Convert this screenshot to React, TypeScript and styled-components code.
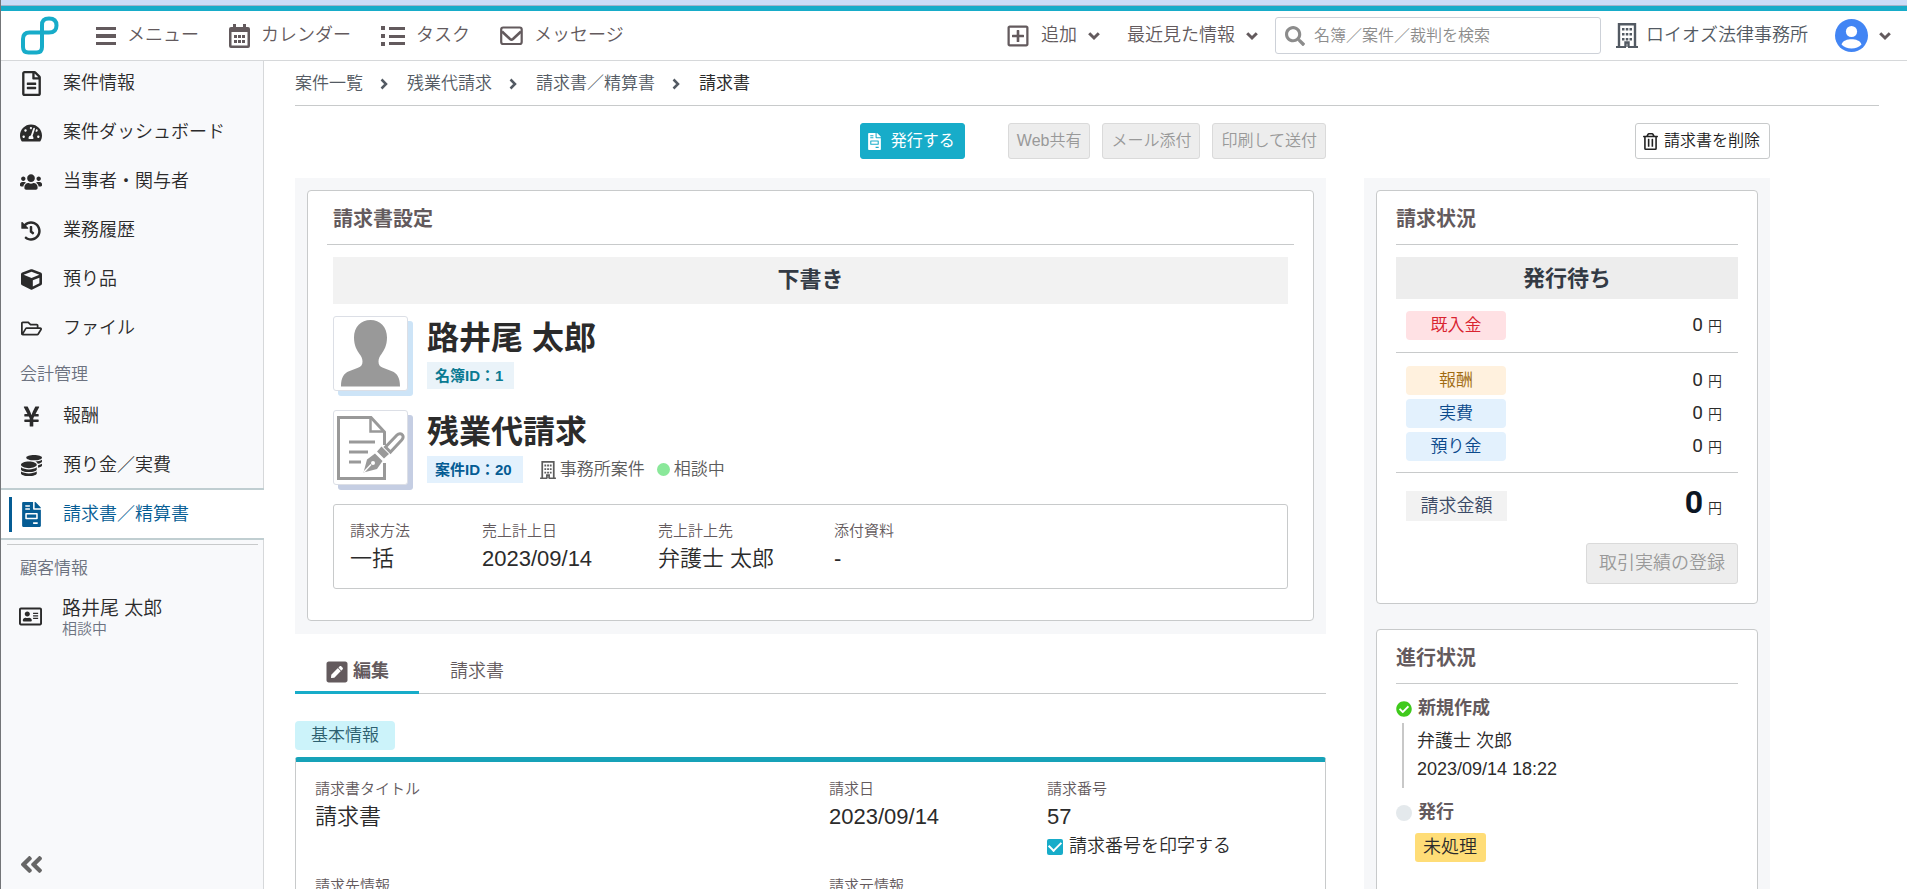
import React from "react";
import styled, { createGlobalStyle, css } from "styled-components";
import {
  FaAngleDoubleLeft,
  FaCheckCircle,
  FaCoins,
  FaCube,
  FaFileInvoice,
  FaHistory,
  FaPenSquare,
  FaRegAddressCard,
  FaRegFileAlt,
  FaRegFolderOpen,
  FaRegPlusSquare,
  FaRegTrashAlt,
  FaSearch,
  FaTachometerAlt,
  FaUsers,
  FaYenSign,
} from "react-icons/fa";

const color = {
  teal: "#17acc9",
  line: "#c8cacb",
  ink: "#2b2b2b",
  brown: "#635a5d",
  slate: "#535a63",
  muted: "#6c7280",
  panel: "#f6f7f9",
};

const GlobalStyle = createGlobalStyle`
  * { box-sizing: border-box; }
  body {
    margin: 0;
    background: #fff;
    color: ${color.ink};
    font-family: "Liberation Sans", "Noto Sans CJK JP", sans-serif;
    font-size: 18px;
    line-height: 1.5;
    font-weight: 350;
  }
  button, input { font: inherit; }
  button { cursor: pointer; }
  a { color: inherit; text-decoration: none; }
  h1, h2, h3, p, dl, dd, ul, ol { margin: 0; padding: 0; font-weight: inherit; font-size: inherit; }
  ul, ol { list-style: none; }
  svg { display: block; flex: none; }
`;

/* ---------- frame ---------- */

const Frame = styled.div`
  height: 100vh;
  display: flex;
  flex-direction: column;
  overflow: hidden;
  border-left: 1px solid #737578;
`;

const TopStrip = styled.div`
  flex: none;
  height: 11px;
  background: #cbdcf7;
  border-bottom: 5px solid ${color.teal};
  box-shadow: inset 0 -1px 0 #a5b3cb;
`;

const Header = styled.header`
  flex: none;
  height: 50px;
  display: flex;
  align-items: center;
  padding: 0 16px 0 20px;
  border-bottom: 1px solid #d6d8da;
  color: ${color.brown};
`;

const HeaderNav = styled.nav`
  display: flex;
  align-items: center;
  gap: 30px;
  margin-left: 37px;
`;

const HeaderLink = styled.a`
  display: flex;
  align-items: center;
  gap: 11px;
  white-space: nowrap;
`;

const HeaderTools = styled.div`
  display: flex;
  align-items: center;
  margin-left: auto;
`;

const HeaderButton = styled.button<{ $after: number }>`
  display: flex;
  align-items: center;
  gap: 11px;
  margin-right: ${(p) => p.$after}px;
  padding: 0;
  border: 0;
  background: none;
  color: inherit;
  white-space: nowrap;
`;

const SearchBox = styled.label`
  display: flex;
  align-items: center;
  gap: 9px;
  width: 326px;
  height: 37px;
  padding: 0 9px;
  border: 1px solid #cdd1d8;
  border-radius: 3px;
  color: #8c8c8c;
`;

const SearchInput = styled.input`
  flex: 1;
  min-width: 0;
  border: 0;
  padding: 0;
  outline: 0;
  background: none;
  font-size: 16px;
  &::placeholder { color: #8c8c8c; opacity: 1; }
`;

const OfficeLink = styled.a`
  display: flex;
  align-items: center;
  gap: 8px;
  margin: 0 27px 0 15px;
  white-space: nowrap;
  color: ${color.slate};
`;

const Body = styled.div`
  flex: 1;
  min-height: 0;
  display: flex;
`;

/* ---------- sidebar ---------- */

const Sidebar = styled.aside`
  flex: none;
  width: 263px;
  display: flex;
  flex-direction: column;
  background: #f8f9fb;
  border-right: 1px solid #d6d8da;
`;

const SideList = styled.ul`
  margin-top: -2px;
`;

const SideLink = styled.a<{ $active?: boolean }>`
  display: flex;
  align-items: center;
  height: 49px;
  padding-left: 19px;
  white-space: nowrap;
  ${(p) =>
    p.$active &&
    css`
      position: relative;
      height: 52px;
      margin: -2px -1px 0 0;
      padding-left: 8px;
      border: solid #c0ced1;
      border-width: 2px 0;
      background: #fff;
      color: #055c94;
    `}
`;

const ActiveBar = styled.span`
  width: 3px;
  height: 35px;
  margin-right: 8px;
  background: #055c94;
`;

const SideIcon = styled.span`
  display: flex;
  justify-content: center;
  width: 22px;
  margin-right: 21px;
`;

const SideHeading = styled.h3`
  height: 39px;
  padding-left: 19px;
  line-height: 43px;
  font-size: 17px;
  color: ${color.muted};
`;

const ClientGroup = styled.section`
  margin: 4px 5px 0 6px;
  padding-top: 4px;
  border-top: 1px solid ${color.line};
`;

const ClientHeading = styled(SideHeading)`
  padding-left: 13px;
  line-height: 39px;
`;

const ClientLink = styled.a`
  display: flex;
  align-items: center;
  gap: 20px;
  padding: 8px 0 0 12px;
`;

const ClientName = styled.strong`
  display: block;
  font-size: 19px;
  line-height: 25px;
  font-weight: 350;
`;

const ClientState = styled.span`
  display: block;
  font-size: 15px;
  line-height: 16px;
  color: ${color.muted};
`;

const CollapseButton = styled.button`
  align-self: flex-start;
  margin: auto 0 11px 17px;
  padding: 0;
  border: 0;
  background: none;
  color: #666;
`;

/* ---------- main ---------- */

const Main = styled.main`
  flex: 1;
  min-width: 0;
  padding: 0 28px 0 31px;
  overflow-y: auto;
  scrollbar-width: none;
`;

const Breadcrumb = styled.ol`
  display: flex;
  align-items: center;
  height: 45px;
  padding-top: 1px;
  border-bottom: 1px solid ${color.line};
  font-size: 17px;
  color: ${color.slate};
  white-space: nowrap;
`;

const Crumb = styled.li`
  display: flex;
  align-items: center;
  gap: 16px;
  margin-right: 18px;
`;

const CurrentCrumb = styled.span`
  font-weight: 400;
  color: ${color.ink};
`;

const Columns = styled.div`
  display: grid;
  grid-template-columns: minmax(0, 1fr) 406px;
  column-gap: 38px;
  margin-right: 109px;
`;

const Toolbar = styled.div`
  display: flex;
  justify-content: flex-end;
  gap: 12px;
  padding: 17px 0 19px;
`;

const Button = styled.button<{ $kind?: "primary" | "plain"; $large?: boolean }>`
  display: flex;
  align-items: center;
  justify-content: center;
  height: ${(p) => (p.$large ? 41 : 36)}px;
  padding: 0 ${(p) => (p.$large ? 12 : 8)}px;
  border: 1px solid #dadada;
  border-radius: 3px;
  background: #ededed;
  color: #999;
  font-size: ${(p) => (p.$large ? 18 : 16)}px;
  white-space: nowrap;
  ${(p) =>
    p.$kind === "primary" &&
    css`
      gap: 8px;
      margin-right: 31px;
      padding: 0 9px 0 5px;
      border-color: ${color.teal};
      background: ${color.teal};
      color: #fff;
      font-weight: 400;
    `}
  ${(p) =>
    p.$kind === "plain" &&
    css`
      gap: 5px;
      padding: 0 9px 0 6px;
      border-color: ${color.line};
      background: #fff;
      color: #222;
    `}
`;

const Panel = styled.div`
  padding: 12px 12px 13px;
  background: ${color.panel};
`;

const Card = styled.section`
  padding: 0 19px;
  border: 1px solid ${color.line};
  border-radius: 4px;
  background: #fff;
  & + & { margin-top: 25px; }
`;

const CardTitle = styled.h2<{ $inset?: boolean }>`
  height: 54px;
  padding-left: ${(p) => (p.$inset ? 6 : 0)}px;
  border-bottom: 1px solid ${color.line};
  line-height: 56px;
  font-size: 20px;
  font-weight: 700;
  color: ${color.brown};
`;

const SettingsBody = styled.div`
  padding: 12px 6px 31px;
`;

const StatusBand = styled.p<{ $tall?: boolean }>`
  height: ${(p) => (p.$tall ? 47 : 42)}px;
  line-height: ${(p) => (p.$tall ? 45 : 43)}px;
  background: ${(p) => (p.$tall ? "#f2f2f2" : "#ededed")};
  text-align: center;
  font-size: 22px;
  font-weight: 700;
  color: #333a44;
`;

const BillingBody = styled.div`
  padding: 12px 0 19px;
`;

const Subject = styled.div`
  display: flex;
  gap: 19px;
  margin-top: 12px;
  & + & { margin-top: 19px; }
`;

const Thumb = styled.div<{ $shadow: string }>`
  flex: none;
  display: grid;
  place-items: center;
  width: 75px;
  height: 75px;
  border: 1px solid #dcdfe6;
  border-radius: 3px;
  background: #fff;
  box-shadow: 5px 5px 0 ${(p) => p.$shadow};
`;

const SubjectName = styled.h3`
  margin-bottom: 2px;
  line-height: 44px;
  font-size: 32px;
  font-weight: 700;
`;

const SubjectMeta = styled.div`
  display: flex;
  align-items: center;
  font-size: 17px;
  line-height: 27px;
  color: #5c5c5c;
`;

const IdTag = styled.span<{ $blue?: boolean }>`
  height: 27px;
  margin-right: 17px;
  padding: 0 11px 0 8px;
  font-size: 15px;
  font-weight: 700;
  background: ${(p) => (p.$blue ? "#e3f1fd" : "#eaf3f9")};
  color: ${(p) => (p.$blue ? "#055c94" : "#0a7a92")};
`;

const MetaItem = styled.span`
  display: flex;
  align-items: center;
  gap: 4px;
  margin-right: 12px;
`;

const Dot = styled.i`
  width: 13px;
  height: 13px;
  border-radius: 50%;
  background: #8ae89a;
`;

const Summary = styled.dl`
  display: grid;
  grid-template-columns: 132px 176px 176px 1fr;
  height: 85px;
  margin-top: 19px;
  padding: 14px 16px 12px;
  border: 1px solid ${color.line};
  border-radius: 3px;
`;

const Term = styled.dt`
  font-size: 15px;
  line-height: 24px;
  color: ${color.brown};
`;

const Value = styled.dd`
  font-size: 22px;
  line-height: 32px;
`;

const Tabs = styled.div`
  display: flex;
  gap: 1px;
  height: 46px;
  margin-top: 14px;
  border-bottom: 1px solid ${color.line};
`;

const Tab = styled.button<{ $active?: boolean }>`
  display: flex;
  align-items: center;
  gap: 4px;
  height: 46px;
  padding: 4px 30px 0;
  border: 0;
  border-bottom: 3px solid ${(p) => (p.$active ? color.teal : "transparent")};
  background: none;
  font-weight: ${(p) => (p.$active ? 700 : 350)};
  color: ${color.brown};
`;

const SectionTag = styled.h2`
  width: 100px;
  height: 29px;
  margin: 27px 0 7px;
  border-radius: 4px;
  background: #ccf3fa;
  line-height: 29px;
  text-align: center;
  font-size: 17px;
  color: #2d6070;
`;

const InfoCard = styled.dl`
  display: grid;
  grid-template-columns: minmax(0, 1fr) 218px 278px;
  row-gap: 14px;
  padding: 15px 0 20px 19px;
  border: 1px solid ${color.line};
  border-top: 5px solid #17a2b8;
  border-radius: 3px;
`;

const CheckLabel = styled.label`
  display: flex;
  align-items: center;
  gap: 6px;
  height: 27px;
`;

const Checkbox = styled.input`
  appearance: none;
  flex: none;
  width: 16px;
  height: 16px;
  margin: 0;
  border-radius: 2px;
  background: ${color.teal};
  display: grid;
  place-items: center;
  &:checked::after {
    content: "";
    width: 10px;
    height: 6px;
    margin-bottom: 3px;
    border: solid #fff;
    border-width: 0 0 2px 2px;
    transform: rotate(-45deg);
  }
`;

/* ---------- billing status ---------- */

const AmountGroup = styled.dl`
  display: flex;
  flex-direction: column;
  gap: 4px;
  padding: 12px 16px 12px 10px;
  & + & {
    padding-top: 13px;
    padding-bottom: 11px;
    border-top: 1px solid ${color.line};
  }
`;

const AmountRow = styled.div`
  display: flex;
  align-items: center;
  justify-content: space-between;
  height: 29px;
`;

const tones = {
  red: ["#ffe1e4", "#d9232f"],
  amber: ["#fff1de", "#a06b10"],
  blue: ["#e3f1fd", "#0b4a8c"],
};

const AmountLabel = styled.dt<{ $tone: keyof typeof tones }>`
  width: 100px;
  height: 29px;
  border-radius: 4px;
  line-height: 29px;
  text-align: center;
  font-size: 17px;
  background: ${(p) => tones[p.$tone][0]};
  color: ${(p) => tones[p.$tone][1]};
`;

const AmountValue = styled.dd`
  font-family: Roboto, "Noto Sans CJK JP", sans-serif;
  font-size: 19px;
  font-weight: 400;
  line-height: 27px;
`;

const Unit = styled.small`
  margin-left: 5px;
  font-size: 14px;
  font-weight: 350;
`;

const TotalRow = styled.dl`
  display: flex;
  justify-content: space-between;
  align-items: center;
  height: 66px;
  padding: 0 16px 0 10px;
  border-top: 1px solid ${color.line};
`;

const TotalLabel = styled.dt`
  width: 101px;
  line-height: 30px;
  text-align: center;
  background: #f2f2f2;
  color: #3b4a66;
`;

const TotalValue = styled(AmountValue)`
  font-size: 32px;
  font-weight: 700;
  color: #0c1624;
  & small { color: ${color.ink}; }
`;

const CardFooter = styled.div`
  display: flex;
  justify-content: flex-end;
  padding-top: 5px;
`;

/* ---------- progress ---------- */

const Steps = styled.ol`
  padding: 12px 0 40px;
`;

const StepHead = styled.h3`
  display: flex;
  align-items: center;
  gap: 6px;
  height: 27px;
  padding-bottom: 2px;
  font-weight: 700;
  color: ${color.brown};
`;

const PendingDot = styled.i`
  width: 16px;
  height: 16px;
  border-radius: 50%;
  background: #e4e9ec;
`;

const StepDetail = styled.div`
  height: 65px;
  margin: 0 0 12px 6px;
  padding: 4px 0 0 13px;
  border-left: 2px solid #c8c8c8;
  line-height: 28px;
`;

const PendingTag = styled.p`
  width: fit-content;
  margin: 6px 0 0 19px;
  padding: 0 9px 0 8px;
  border-radius: 3px;
  background: #ffdd77;
  line-height: 29px;
`;

/* ---------- drawings ---------- */

const Logo = () => (
  <svg width="38" height="39" viewBox="0 0 38 39" fill="none" stroke={color.teal} strokeWidth="4">
    <path d="M21 16.500V31q0 5.500-5.500 5.500h-8q-5.500 0-5.500-5.500v-8q0-6.500 6.500-6.500H28q7.500 0 7.500-7T28 2.500t-7 7z" />
  </svg>
);

const ChevronDown = () => (
  <svg width="12" height="12" viewBox="0 0 12 12" fill="none" stroke="currentColor" strokeWidth="3">
    <path d="M1.200 3.200L6 8l4.800-4.800" />
  </svg>
);

const ChevronRight = () => (
  <svg width="10" height="12" viewBox="0 0 10 12" fill="none" stroke="currentColor" strokeWidth="2.500">
    <path d="M2.500 1.500L7 6l-4.500 4.500" />
  </svg>
);

const BarsIcon = () => (
  <svg width="20" height="20" viewBox="0 0 20 20" fill="currentColor">
    <path d="M0 1h20v3H0zM0 8h20v4H0zM0 16h20v3H0z" />
  </svg>
);

const CalendarIcon = () => (
  <svg width="21" height="24" viewBox="0 0 21 24">
    <path fill="currentColor" fillRule="evenodd" d="M4 0h3v3h7V0h3v3h2a2 2 0 0 1 2 2v17a2 2 0 0 1-2 2H2a2 2 0 0 1-2-2V5a2 2 0 0 1 2-2h2zM2.500 8v13.500h16V8z" />
    <path fill="currentColor" d="M5 11h3v3H5zM9 11h3v3H9zM13 11h3v3h-3zM5 16h3v3H5zM9 16h3v3H9zM13 16h3v3h-3z" />
  </svg>
);

const ListIcon = () => (
  <svg width="24" height="20" viewBox="0 0 24 20" fill="currentColor">
    <path d="M0 0h4v4H0zM0 8h4v4H0zM0 16h4v4H0zM8 1h16v3H8zM8 9h16v3H8zM8 16h16v3H8z" />
  </svg>
);

const MailIcon = () => (
  <svg width="23" height="20" viewBox="0 0 23 20" fill="none" stroke="currentColor" strokeWidth="2.200">
    <rect x="1.200" y="1.500" width="20.500" height="16.500" rx="2" />
    <path d="M2 5.500l8 7.500q1.500 1.200 3 0l8-7.500" strokeWidth="2.600" />
  </svg>
);

const BuildingIcon = ({ width = 22, height = 25 }: { width?: number; height?: number }) => (
  <svg width={width} height={height} viewBox="0 0 22 25">
    <path fill="none" stroke="currentColor" strokeWidth="2.400" d="M3 24V1.200h16V24M9.500 24v-4.500h3V24" />
    <path fill="currentColor" d="M0 23h10v2H0zM12 23h10v2H12zM6 5h2.500v2.500H6zM9.800 5h2.500v2.500H9.800zM13.500 5H16v2.500h-2.500zM6 10h2.500v2.500H6zM9.800 10h2.500v2.500H9.800zM13.500 10H16v2.500h-2.500zM6 15h2.500v2.500H6zM9.800 15h2.500v2.500H9.800zM13.500 15H16v2.500h-2.500z" />
  </svg>
);

const AvatarIcon = () => (
  <svg width="33" height="33" viewBox="0 0 33 33">
    <circle cx="16.500" cy="16.500" r="16.500" fill="#4285f4" />
    <circle cx="16.500" cy="12.500" r="5.600" fill="#fff" />
    <path fill="#fff" d="M6.500 25.500c1-4 6-5.300 10-5.300s9 1.300 10 5.300c-2.500 2.700-6 4-10 4s-7.500-1.300-10-4z" />
  </svg>
);

const PersonThumb = () => (
  <svg width="59" height="67" viewBox="0 0 59 67" fill="#999">
    <path d="M29.500 0C39 0 46 7 46 17.500c0 8-3 13-5.500 16.500-1.500 2.200-3 4-3 7.500 0 3.300 1.300 5 4.500 6.300l9 3.500c5 2 8 6 8 15.200H0C0 57.500 3 53.300 8 51.300l9-3.500c3.200-1.300 4.500-3 4.500-6.300 0-3.500-1.500-5.300-3-7.500C16 30.500 13 25.500 13 17.500 13 7 20 0 29.500 0z" />
  </svg>
);

const DocumentThumb = () => (
  <svg width="68" height="66" viewBox="0 0 68 66">
    <g fill="none" stroke="#999" strokeWidth="3">
      <path d="M47.500 30V17L34 2.500H1.500v61h46V48" />
      <path d="M33.500 3v13.500H47" strokeWidth="2.500" />
      <path d="M12 27h26M12 37h19M12 47h12" />
    </g>
    <path fill="#999" d="M26.500 57.500l3.500-13 8-6 7.500 7.500-5.500 8zM40 36.500l4.500-5 7.500 7.500-5 4.500z" />
    <path fill="none" stroke="#999" strokeWidth="3" d="M48.500 32L60 20c2-2 4.500-1.500 5.500 0s.5 3.500-.8 5L53.500 37z" />
    <path fill="none" stroke="#fff" strokeWidth="1.400" d="M27 57l7-7.500" />
    <circle cx="36" cy="48" r="2" fill="#fff" />
  </svg>
);

/* ---------- data ---------- */

const caseLinks: [string, React.ReactNode][] = [
  ["案件情報", <FaRegFileAlt size={25} />],
  ["案件ダッシュボード", <FaTachometerAlt size={22} />],
  ["当事者・関与者", <FaUsers size={22} />],
  ["業務履歴", <FaHistory size={20} />],
  ["預り品", <FaCube size={21} />],
  ["ファイル", <FaRegFolderOpen size={21} />],
];

const accountLinks: [string, React.ReactNode][] = [
  ["報酬", <FaYenSign size={23} />],
  ["預り金／実費", <FaCoins size={21} />],
];

const headerLinks: [string, React.ReactNode][] = [
  ["メニュー", <BarsIcon />],
  ["カレンダー", <CalendarIcon />],
  ["タスク", <ListIcon />],
  ["メッセージ", <MailIcon />],
];

const crumbs = ["案件一覧", "残業代請求", "請求書／精算書"];

const summary = [
  ["請求方法", "一括"],
  ["売上計上日", "2023/09/14"],
  ["売上計上先", "弁護士 太郎"],
  ["添付資料", "-"],
];

const breakdown: [string, keyof typeof tones][] = [
  ["報酬", "amber"],
  ["実費", "blue"],
  ["預り金", "blue"],
];

const Amount = ({ label, tone }: { label: string; tone: keyof typeof tones }) => (
  <AmountRow>
    <AmountLabel $tone={tone}>{label}</AmountLabel>
    <AmountValue>
      0<Unit>円</Unit>
    </AmountValue>
  </AmountRow>
);

const SideItem = ({ label, icon }: { label: string; icon: React.ReactNode }) => (
  <li>
    <SideLink href="#">
      <SideIcon>{icon}</SideIcon>
      {label}
    </SideLink>
  </li>
);

export default function App() {
  return (
    <Frame>
      <GlobalStyle />
      <TopStrip />
      <Header>
        <a href="#" aria-label="ホーム">
          <Logo />
        </a>
        <HeaderNav>
          {headerLinks.map(([label, icon]) => (
            <HeaderLink href="#" key={label}>
              {icon}
              {label}
            </HeaderLink>
          ))}
        </HeaderNav>
        <HeaderTools>
          <HeaderButton $after={27}>
            <FaRegPlusSquare size={24} />
            追加
            <ChevronDown />
          </HeaderButton>
          <HeaderButton $after={17}>
            最近見た情報
            <ChevronDown />
          </HeaderButton>
          <SearchBox>
            <FaSearch size={20} />
            <SearchInput type="search" aria-label="検索" placeholder="名簿／案件／裁判を検索" />
          </SearchBox>
          <OfficeLink href="#">
            <BuildingIcon />
            ロイオズ法律事務所
          </OfficeLink>
          <HeaderButton $after={0} aria-label="アカウント">
            <AvatarIcon />
            <ChevronDown />
          </HeaderButton>
        </HeaderTools>
      </Header>

      <Body>
        <Sidebar>
          <nav>
            <SideList>
              {caseLinks.map(([label, icon]) => (
                <SideItem key={label} label={label} icon={icon} />
              ))}
            </SideList>
            <SideHeading>会計管理</SideHeading>
            <ul>
              {accountLinks.map(([label, icon]) => (
                <SideItem key={label} label={label} icon={icon} />
              ))}
              <li>
                <SideLink href="#" $active aria-current="page">
                  <ActiveBar />
                  <SideIcon>
                    <FaFileInvoice size={25} />
                  </SideIcon>
                  請求書／精算書
                </SideLink>
              </li>
            </ul>
          </nav>
          <ClientGroup>
            <ClientHeading>顧客情報</ClientHeading>
            <ClientLink href="#">
              <FaRegAddressCard size={23} />
              <span>
                <ClientName>路井尾 太郎</ClientName>
                <ClientState>相談中</ClientState>
              </span>
            </ClientLink>
          </ClientGroup>
          <CollapseButton aria-label="サイドバーを閉じる">
            <FaAngleDoubleLeft size={27} />
          </CollapseButton>
        </Sidebar>

        <Main>
          <Breadcrumb>
            {crumbs.map((crumb) => (
              <Crumb key={crumb}>
                <a href="#">{crumb}</a>
                <ChevronRight />
              </Crumb>
            ))}
            <Crumb>
              <CurrentCrumb aria-current="page">請求書</CurrentCrumb>
            </Crumb>
          </Breadcrumb>

          <Columns>
            <div>
              <Toolbar>
                <Button $kind="primary">
                  <FaFileInvoice size={17} />
                  発行する
                </Button>
                <Button disabled>Web共有</Button>
                <Button disabled>メール添付</Button>
                <Button disabled>印刷して送付</Button>
              </Toolbar>

              <Panel>
                <Card>
                  <CardTitle $inset>請求書設定</CardTitle>
                  <SettingsBody>
                    <StatusBand $tall>下書き</StatusBand>
                    <Subject>
                      <Thumb $shadow="#cde4f7">
                        <PersonThumb />
                      </Thumb>
                      <div>
                        <SubjectName>路井尾 太郎</SubjectName>
                        <SubjectMeta>
                          <IdTag>名簿ID：1</IdTag>
                        </SubjectMeta>
                      </div>
                    </Subject>
                    <Subject>
                      <Thumb $shadow="#c5cee3">
                        <DocumentThumb />
                      </Thumb>
                      <div>
                        <SubjectName>残業代請求</SubjectName>
                        <SubjectMeta>
                          <IdTag $blue>案件ID：20</IdTag>
                          <MetaItem>
                            <BuildingIcon width={16} height={18} />
                            事務所案件
                          </MetaItem>
                          <MetaItem>
                            <Dot />
                            相談中
                          </MetaItem>
                        </SubjectMeta>
                      </div>
                    </Subject>
                    <Summary>
                      {summary.map(([term, value]) => (
                        <div key={term}>
                          <Term>{term}</Term>
                          <Value>{value}</Value>
                        </div>
                      ))}
                    </Summary>
                  </SettingsBody>
                </Card>
              </Panel>

              <Tabs role="tablist">
                <Tab role="tab" aria-selected="true" $active>
                  <FaPenSquare size={24} />
                  編集
                </Tab>
                <Tab role="tab" aria-selected="false">
                  請求書
                </Tab>
              </Tabs>

              <SectionTag>基本情報</SectionTag>
              <InfoCard>
                <div>
                  <Term>請求書タイトル</Term>
                  <Value>請求書</Value>
                </div>
                <div>
                  <Term>請求日</Term>
                  <Value>2023/09/14</Value>
                </div>
                <div>
                  <Term>請求番号</Term>
                  <Value>57</Value>
                  <CheckLabel>
                    <Checkbox type="checkbox" defaultChecked />
                    請求番号を印字する
                  </CheckLabel>
                </div>
                <div>
                  <Term>請求先情報</Term>
                </div>
                <div>
                  <Term>請求元情報</Term>
                </div>
              </InfoCard>
            </div>

            <div>
              <Toolbar>
                <Button $kind="plain">
                  <FaRegTrashAlt size={17} />
                  請求書を削除
                </Button>
              </Toolbar>
              <Panel>
                <Card>
                  <CardTitle>請求状況</CardTitle>
                  <BillingBody>
                    <StatusBand>発行待ち</StatusBand>
                    <AmountGroup>
                      <Amount label="既入金" tone="red" />
                    </AmountGroup>
                    <AmountGroup>
                      {breakdown.map(([label, tone]) => (
                        <Amount key={label} label={label} tone={tone} />
                      ))}
                    </AmountGroup>
                    <TotalRow>
                      <TotalLabel>請求金額</TotalLabel>
                      <TotalValue>
                        0<Unit>円</Unit>
                      </TotalValue>
                    </TotalRow>
                    <CardFooter>
                      <Button disabled $large>
                        取引実績の登録
                      </Button>
                    </CardFooter>
                  </BillingBody>
                </Card>
                <Card>
                  <CardTitle>進行状況</CardTitle>
                  <Steps>
                    <li>
                      <StepHead>
                        <FaCheckCircle size={16} color="#3fca1c" />
                        新規作成
                      </StepHead>
                      <StepDetail>
                        <p>弁護士 次郎</p>
                        <p>2023/09/14 18:22</p>
                      </StepDetail>
                    </li>
                    <li>
                      <StepHead>
                        <PendingDot />
                        発行
                      </StepHead>
                      <PendingTag>未処理</PendingTag>
                    </li>
                  </Steps>
                </Card>
              </Panel>
            </div>
          </Columns>
        </Main>
      </Body>
    </Frame>
  );
}
